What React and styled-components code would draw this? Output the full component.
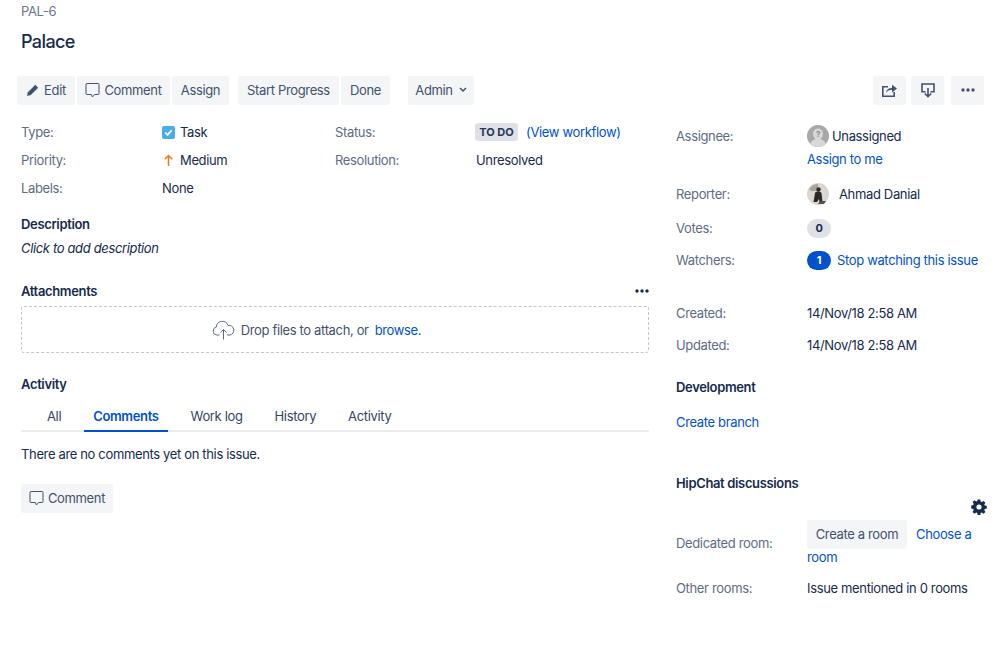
import styled, { createGlobalStyle } from "styled-components";

const GlobalStyle = createGlobalStyle`
  html, body {
    margin: 0;
    padding: 0;
    background: #fff;
    color: #172b4d;
    font-family: Inter, "Liberation Sans", sans-serif;
    font-size: 13px;
    letter-spacing: -0.35px;
    line-height: 20px;
  }
  * { box-sizing: border-box; }
`;

const Page = styled.div`
  width: 998px;
  height: 662px;
  overflow: hidden;
  padding: 1px 14px 0 21px;
`;

const IssueKey = styled.div`
  color: #6b778c;
  height: 20px;
`;

const Title = styled.h1`
  margin: 9px 0 0;
  font-size: 18px;
  line-height: 24px;
  font-weight: 500;
  letter-spacing: -0.6px;
  color: #172b4d;
`;

const Toolbar = styled.div`
  display: flex;
  justify-content: space-between;
  margin: 22px 0 0 -4px;
`;

const Group = styled.div`
  display: flex;
  gap: ${(p) => p.$gap ?? 2}px;
  margin-right: ${(p) => p.$after ?? 0}px;
`;

const GroupRow = styled.div`
  display: flex;
`;

const Button = styled.button`
  display: inline-flex;
  align-items: center;
  justify-content: center;
  gap: ${(p) => p.$gap ?? 4}px;
  height: 29px;
  width: ${(p) => p.$width}px;
  padding: 0 0 1px;
  border: 0;
  border-radius: 3px;
  background: #f4f5f7;
  color: #42526e;
  font: inherit;
  letter-spacing: inherit;
`;

const Main = styled.div`
  display: grid;
  grid-template-columns: 628px 1fr;
  column-gap: 27px;
`;

const Left = styled.div`
  padding-top: 13px;
`;

const Right = styled.div`
  padding-top: 20px;
`;

const Details = styled.div`
  display: grid;
  grid-template-columns: 141px 173px 141px 1fr;
  grid-auto-rows: 28px;
  align-items: center;
`;

const Label = styled.div`
  color: #5e6c84;
  padding-top: ${(p) => p.$pad ?? 0}px;
`;

const Value = styled.div`
  display: flex;
  align-items: center;
  gap: ${(p) => p.$gap ?? 0}px;
  color: #172b4d;
`;

const Lozenge = styled.span`
  display: inline-block;
  height: 18px;
  width: 43px;
  margin: 0 8px 0 -1px;
  border-radius: 3px;
  background: #dfe1e6;
  color: #253858;
  font-size: 11px;
  line-height: 18px;
  font-weight: 700;
  letter-spacing: 0;
  text-align: center;
`;

const Link = styled.span`
  color: #0052cc;
`;

const SectionHead = styled.div`
  display: flex;
  align-items: center;
  justify-content: space-between;
  margin-top: ${(p) => p.$top}px;
  height: 20px;
  font-weight: 600;
  color: #172b4d;
`;

const Italic = styled.div`
  margin-top: 4px;
  font-style: italic;
`;

const DropZone = styled.div`
  display: flex;
  align-items: center;
  justify-content: center;
  height: 47px;
  margin-top: 5px;
  border: 1px dashed #c1c7d0;
  border-radius: 3px;
  color: #42526e;
  padding-right: 37px;
`;

const DropText = styled.span`
  margin: 0 6px;
`;

const Tabs = styled.div`
  display: flex;
  height: 27px;
  margin-top: 11px;
  padding-left: 17px;
  border-bottom: 2px solid #ebecf0;
`;

const Tab = styled.div`
  height: 27px;
  padding: 1px 9px 0;
  margin-right: 14px;
  color: ${(p) => (p.$active ? "#0052cc" : "#344563")};
  font-weight: ${(p) => (p.$active ? 600 : 400)};
  border-bottom: 2px solid ${(p) => (p.$active ? "#0052cc" : "transparent")};
`;

const Empty = styled.div`
  margin-top: 12px;
`;

const CommentRow = styled.div`
  margin-top: 20px;
`;

const Field = styled.div`
  display: grid;
  grid-template-columns: 131px 1fr;
  align-items: ${(p) => p.$align ?? "center"};
  margin-top: ${(p) => p.$top ?? 0}px;
`;

const Cell = styled.div`
  min-height: ${(p) => p.$h ?? 20}px;
  margin-top: ${(p) => p.$top ?? 0}px;
  display: flex;
  align-items: center;
  gap: ${(p) => p.$gap ?? 0}px;
  white-space: nowrap;
`;

const Stack = styled.div`
  display: flex;
  flex-direction: column;
  gap: 2px;
`;

const Badge = styled.span`
  display: inline-flex;
  align-items: center;
  justify-content: center;
  width: 24px;
  height: 19px;
  border-radius: 10px;
  background: ${(p) => (p.$on ? "#0052cc" : "#dfe1e6")};
  color: ${(p) => (p.$on ? "#fff" : "#172b4d")};
  font-size: 11px;
  font-weight: 700;
`;

const GearRow = styled.div`
  display: flex;
  justify-content: flex-end;
  height: 16px;
  margin: 6px -3px 0 0;
`;

const RoomValue = styled.div`
  display: flex;
  flex-wrap: wrap;
  align-items: center;
  column-gap: 9px;
  margin-top: 5px;
`;

const RoomLink = styled(Link)`
  margin-bottom: 2px;
`;

const RoomTail = styled(Link)`
  flex-basis: 100%;
  margin-top: -2px;
`;

const PencilIcon = () => (
  <svg width="13" height="13" viewBox="0 0 13 13">
    <path d="M9.3.8l2.9 2.9-7.4 7.4-3.8 1 .9-3.9z" fill="#42526e" />
  </svg>
);

const BubbleIcon = () => (
  <svg width="15" height="16" viewBox="0 0 15 16" fill="none" stroke="#42526e" strokeWidth="1">
    <path d="M2 1.5h11a1 1 0 0 1 1 1v9a1 1 0 0 1-1 1H9.6L7.4 15l-.9-2.500H2a1 1 0 0 1-1-1v-9a1 1 0 0 1 1-1z" />
  </svg>
);

const ShareIcon = () => (
  <svg width="15" height="13" viewBox="0 0 15 13">
    <path d="M0 2h6v1.600H1.600v7.800h9.800V8h1.600v5H0z" fill="#42526e" />
    <path d="M4 9c.4-3.200 2.600-5 6-5V.8L15 4.600 10 8.500V5.700C7.500 5.700 5.500 6.800 4 9z" fill="#42526e" />
  </svg>
);

const ExportIcon = () => (
  <svg width="14" height="15" viewBox="0 0 14 15" fill="none" stroke="#42526e">
    <path d="M4.500 8.800H1V1h12v7.800H9.500" strokeWidth="1.600" />
    <path d="M7 5v8.500M3.800 10.500L7 13.700l3.200-3.200" strokeWidth="1.600" />
  </svg>
);

const DotsIcon = ({ color = "#42526e" }) => (
  <svg width="14" height="4" viewBox="0 0 14 4" fill={color}>
    <circle cx="2" cy="2" r="1.700" />
    <circle cx="7" cy="2" r="1.700" />
    <circle cx="12" cy="2" r="1.700" />
  </svg>
);

const ChevronIcon = () => (
  <svg width="8" height="6" viewBox="0 0 8 6" fill="none" stroke="#42526e" strokeWidth="1.500">
    <path d="M1 1l3 3 3-3" />
  </svg>
);

const TaskIcon = () => (
  <svg width="13" height="13" viewBox="0 0 13 13">
    <rect width="13" height="13" rx="2" fill="#4bade8" />
    <path d="M3.300 6.700l2.200 2.200 4.200-4.600" fill="none" stroke="#fff" strokeWidth="1.700" />
  </svg>
);

const ArrowIcon = () => (
  <svg width="13" height="13" viewBox="0 0 13 13" fill="none" stroke="#ed7a1c" strokeWidth="1.500">
    <path d="M6.500 12V1.500M2.700 5.300l3.800-3.800 3.800 3.800" />
  </svg>
);

const CloudIcon = () => (
  <svg width="23" height="20" viewBox="0 0 23 20" fill="none" stroke="#5e6c84" strokeWidth="1">
    <path d="M7.500 15H5a4 4 0 0 1-.7-7.900A6 6 0 0 1 16 5.500a4.800 4.800 0 0 1 2 9.500h-3" />
    <path d="M11.500 19.500V9.500M8.500 12.500l3-3 3 3" />
  </svg>
);

const UnknownAvatar = () => (
  <svg width="22" height="22" viewBox="0 0 22 22">
    <circle cx="11" cy="11" r="11" fill="#a8a8a8" />
    <path d="M3.500 19c.5-3.500 3.500-4 5-5-1.500-1.500-2.500-3-2.500-5.500a5 5 0 0 1 10 0c0 2.500-1 4-2.500 5.500 1.500 1 4.500 1.500 5 5a11 11 0 0 1-15 0z" fill="#d8d8d8" />
    <text x="11" y="11.500" textAnchor="middle" fontSize="8" fontWeight="700" fill="#8c8c8c" fontFamily="Inter, sans-serif">?</text>
  </svg>
);

const PhotoAvatar = () => (
  <svg width="22" height="22" viewBox="0 0 22 22">
    <circle cx="11" cy="11" r="11" fill="#d9d7d5" />
    <path d="M2 6c3-4 6-5 9-5v7H4z" fill="#a8a4a0" />
    <circle cx="11.500" cy="6.500" r="2.200" fill="#2f2b28" />
    <path d="M8 10c1-2 5-2 6.500 0l1 9h-3l-.5-3-2 3H6.500z" fill="#2b2826" />
    <path d="M13 18h6l-2 3h-6z" fill="#55504c" />
  </svg>
);

const GearIcon = () => (
  <svg width="16" height="16" viewBox="0 0 16 16">
    <path
      fillRule="evenodd"
      fill="#172b4d"
      d="M6.700.5h2.600l.4 2 1.100.5 1.800-1.100 1.800 1.800-1.100 1.800.5 1.100 2 .4v2.600l-2 .4-.5 1.100 1.100 1.800-1.800 1.800-1.800-1.100-1.100.5-.4 2H6.700l-.4-2-1.100-.5-1.800 1.100-1.800-1.800 1.100-1.800-.5-1.100-2-.4V6.400l2-.4.5-1.100-1.100-1.800 1.800-1.800 1.800 1.100 1.100-.5zM8 5.400a2.600 2.600 0 1 0 0 5.200 2.600 2.600 0 0 0 0-5.200z"
    />
  </svg>
);

export default function App() {
  return (
    <>
      <GlobalStyle />
      <Page>
        <IssueKey>PAL-6</IssueKey>
        <Title>Palace</Title>

        <Toolbar>
          <GroupRow>
            <Group $after={9}>
              <Button $width={58} $gap={5}>
                <PencilIcon />
                Edit
              </Button>
              <Button $width={93}>
                <BubbleIcon />
                Comment
              </Button>
              <Button $width={57}>Assign</Button>
            </Group>
            <Group $after={18}>
              <Button $width={101}>Start Progress</Button>
              <Button $width={49}>Done</Button>
            </Group>
            <Button $width={66} $gap={6}>
              Admin
              <ChevronIcon />
            </Button>
          </GroupRow>
          <GroupRow>
            <Group $gap={5} $after={7}>
              <Button $width={33}>
                <ShareIcon />
              </Button>
              <Button $width={33}>
                <ExportIcon />
              </Button>
            </Group>
            <Button $width={33}>
              <DotsIcon />
            </Button>
          </GroupRow>
        </Toolbar>

        <Main>
          <Left>
            <Details>
              <Label>Type:</Label>
              <Value $gap={5}>
                <TaskIcon />
                Task
              </Value>
              <Label>Status:</Label>
              <Value>
                <Lozenge>TO DO</Lozenge>
                <Link>(View workflow)</Link>
              </Value>
              <Label>Priority:</Label>
              <Value $gap={5}>
                <ArrowIcon />
                Medium
              </Value>
              <Label>Resolution:</Label>
              <Value>Unresolved</Value>
              <Label>Labels:</Label>
              <Value>None</Value>
            </Details>

            <SectionHead $top={12}>Description</SectionHead>
            <Italic>Click to add description</Italic>

            <SectionHead $top={23}>
              Attachments
              <DotsIcon color="#172b4d" />
            </SectionHead>
            <DropZone>
              <CloudIcon />
              <DropText>Drop files to attach, or</DropText>
              <Link>browse.</Link>
            </DropZone>

            <SectionHead $top={21}>Activity</SectionHead>
            <Tabs>
              <Tab>All</Tab>
              <Tab $active>Comments</Tab>
              <Tab>Work log</Tab>
              <Tab>History</Tab>
              <Tab>Activity</Tab>
            </Tabs>
            <Empty>There are no comments yet on this issue.</Empty>
            <CommentRow>
              <Button $width={92}>
                <BubbleIcon />
                Comment
              </Button>
            </CommentRow>
          </Left>

          <Right>
            <Field $align="start">
              <Label $pad={1}>Assignee:</Label>
              <Stack>
                <Cell $gap={3}>
                  <UnknownAvatar />
                  Unassigned
                </Cell>
                <Cell>
                  <Link>Assign to me</Link>
                </Cell>
              </Stack>
            </Field>
            <Field $top={13}>
              <Label>Reporter:</Label>
              <Cell $h={24} $gap={10}>
                <PhotoAvatar />
                Ahmad Danial
              </Cell>
            </Field>
            <Field $top={12}>
              <Label>Votes:</Label>
              <Cell>
                <Badge>0</Badge>
              </Cell>
            </Field>
            <Field $top={12}>
              <Label>Watchers:</Label>
              <Cell $gap={6}>
                <Badge $on>1</Badge>
                <Link>Stop watching this issue</Link>
              </Cell>
            </Field>
            <Field $top={33}>
              <Label>Created:</Label>
              <Cell>14/Nov/18 2:58 AM</Cell>
            </Field>
            <Field $top={12}>
              <Label>Updated:</Label>
              <Cell>14/Nov/18 2:58 AM</Cell>
            </Field>

            <SectionHead $top={22}>Development</SectionHead>
            <Cell $top={15}>
              <Link>Create branch</Link>
            </Cell>

            <SectionHead $top={41}>HipChat discussions</SectionHead>
            <GearRow>
              <GearIcon />
            </GearRow>
            <Field>
              <Label $pad={4}>Dedicated room:</Label>
              <RoomValue>
                <Button $width={100}>Create a room</Button>
                <RoomLink>Choose a</RoomLink>
                <RoomTail>room</RoomTail>
              </RoomValue>
            </Field>
            <Field $top={11}>
              <Label>Other rooms:</Label>
              <Cell>Issue mentioned in 0 rooms</Cell>
            </Field>
          </Right>
        </Main>
      </Page>
    </>
  );
}
